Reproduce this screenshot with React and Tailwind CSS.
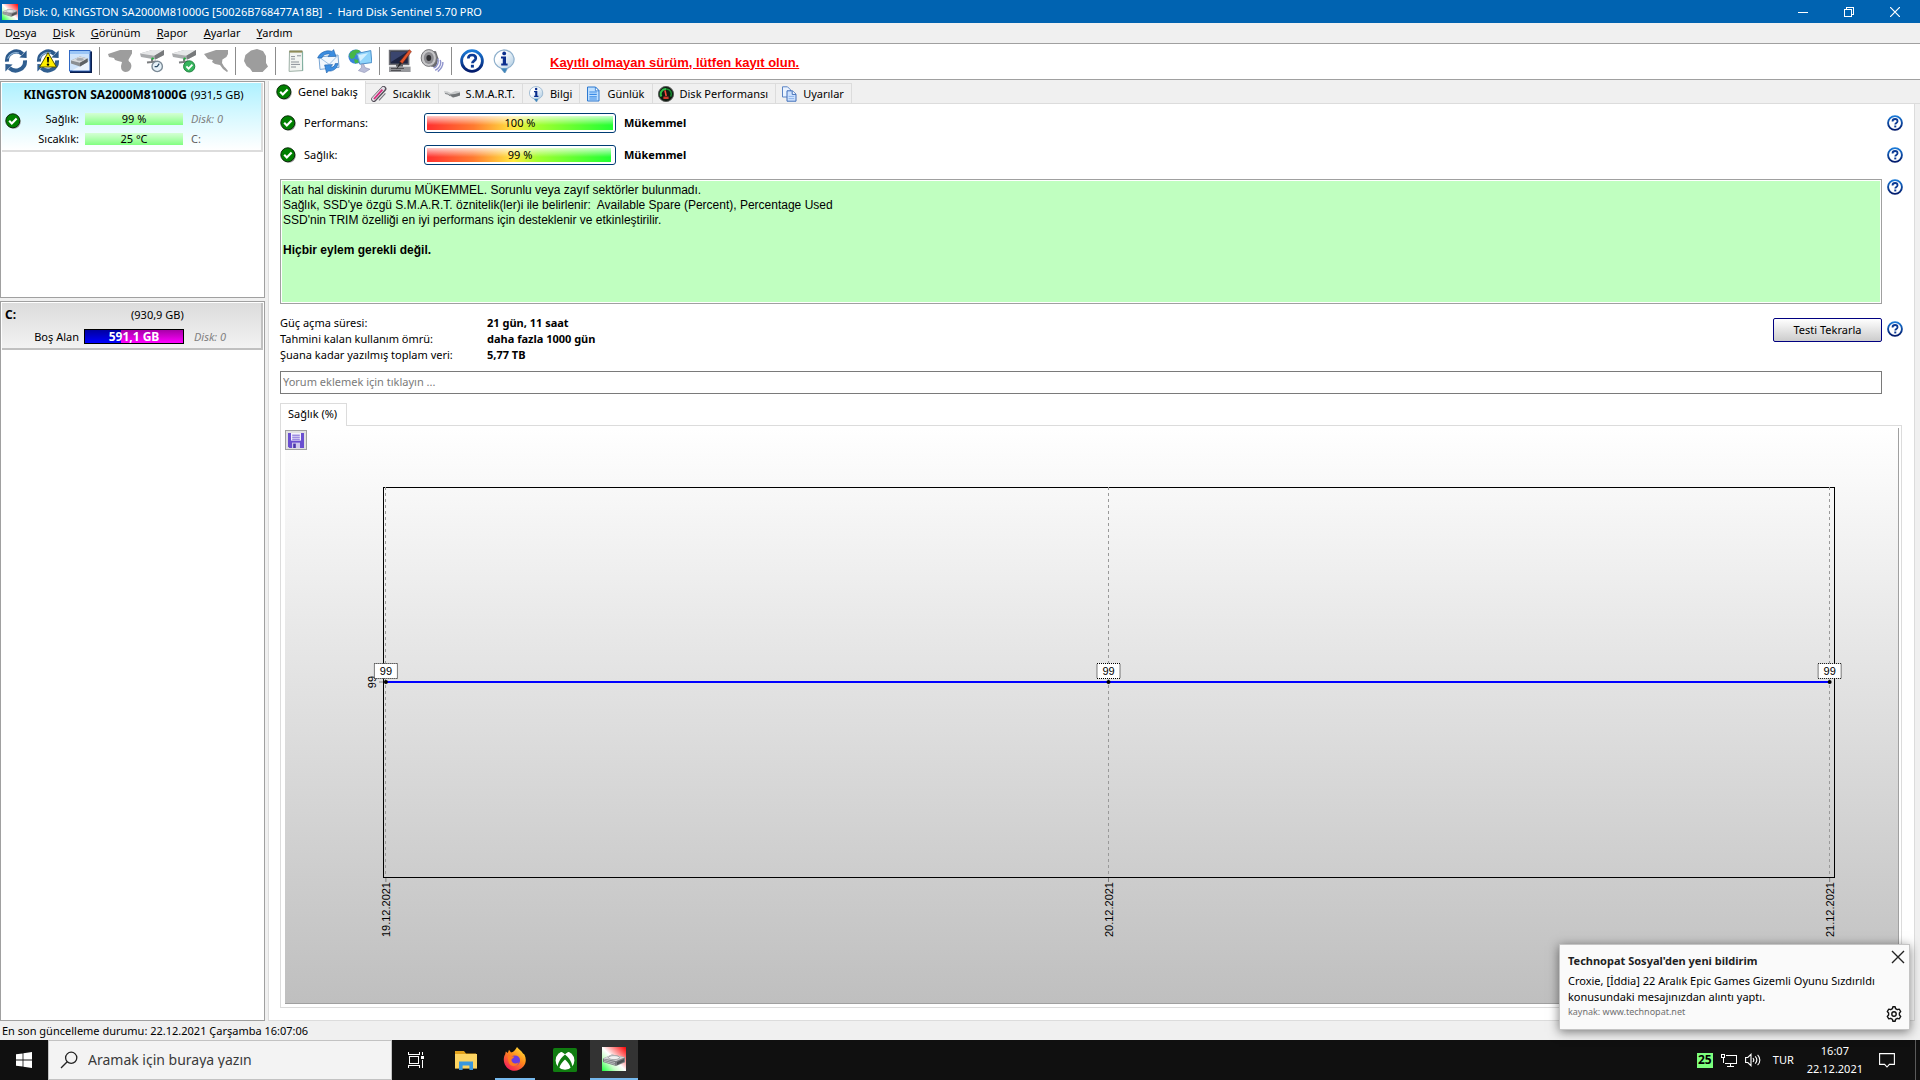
import React from "react";

const menus = [
    ["D", "o", "sya"],
    ["", "D", "isk"],
    ["", "G", "örünüm"],
    ["", "R", "apor"],
    ["", "A", "yarlar"],
    ["", "Y", "ardım"],
];

const history = [
    { date: "19.12.2021", value: 99, x: 0.2 },
    { date: "20.12.2021", value: 99, x: 50 },
    { date: "21.12.2021", value: 99, x: 99.7 },
];

/* ---------- icons ---------- */

function CheckIcon({ className = "h-4 w-4" }) {
    return (
        <svg viewBox="0 0 16 16" className={className} aria-hidden="true">
            <circle cx="8.8" cy="8.8" r="7" fill="#9a9a9a" />
            <circle cx="7.8" cy="7.8" r="7" fill="#008000" stroke="#0a2a0a" />
            <path d="M4.2 7.8l2.6 2.7 4.8-5" fill="none" stroke="#fff" strokeWidth="2.2" />
        </svg>
    );
}

function HelpIcon({ className = "h-4 w-4" }) {
    return (
        <svg viewBox="0 0 24 24" className={className} aria-hidden="true">
            <defs>
                <linearGradient id="helpRing" x1="0" y1="0" x2="0" y2="1">
                    <stop offset="0" stopColor="#1a7ad8" />
                    <stop offset="1" stopColor="#021a6b" />
                </linearGradient>
            </defs>
            <circle cx="12" cy="12" r="10.4" fill="#fff" stroke="url(#helpRing)" strokeWidth="2.8" />
            <path d="M8.3 9.6c0-2.3 1.6-3.6 3.8-3.6s3.7 1.2 3.7 3.2c0 2.6-3.4 2.7-3.4 5" fill="none" stroke="#0b3a94" strokeWidth="2.7" />
            <rect x="10.9" y="15.8" width="3" height="2.8" fill="#0b3a94" />
        </svg>
    );
}

function InfoIcon({ className = "h-4 w-4" }) {
    return (
        <svg viewBox="0 0 24 24" className={className} aria-hidden="true">
            <defs>
                <linearGradient id="infoFill" x1="0" y1="0" x2="1" y2="1">
                    <stop offset="0.3" stopColor="#fff" />
                    <stop offset="1" stopColor="#9cc0dc" />
                </linearGradient>
            </defs>
            <path d="M12 .8a11 9.6 0 0 1 3.4 18.4L12.8 24 9 19.2A11 9.6 0 0 1 12 .8z" fill="url(#infoFill)" stroke="#8fb0cc" strokeWidth="1.2" />
            <path d="M9 19.2l3.8 4.8 2.4-4.8z" fill="#3f86bb" />
            <circle cx="12.2" cy="4.4" r="1.9" fill="#0b2f8e" />
            <path d="M9 7.6h5v7h1.6v1.9H9.2v-1.9h1.6V9.4H9z" fill="#0b2f8e" />
        </svg>
    );
}

function RefreshArrows() {
    return (
        <>
            <path d="M3 12.6A9.3 9.3 0 0 1 18.6 5" fill="none" stroke="#2c5a8c" strokeWidth="4" />
            <path d="M15.4 8.6L22.6 9V1.6z" fill="#2c5a8c" />
            <path d="M21 11.4A9.3 9.3 0 0 1 5.4 19" fill="none" stroke="#315f90" strokeWidth="4" />
            <path d="M8.6 15.4L1.4 15v7.4z" fill="#315f90" />
            <path d="M3.6 9.6A9.3 9.3 0 0 1 15 4" fill="none" stroke="#8db4d6" strokeWidth="1.2" />
        </>
    );
}

function RefreshIcon() {
    return <svg viewBox="0 0 24 24" className="h-6 w-6" aria-hidden="true"><RefreshArrows /></svg>;
}

function RefreshWarnIcon() {
    return (
        <svg viewBox="0 0 24 24" className="h-6 w-6" aria-hidden="true">
            <RefreshArrows />
            <path d="M12 3.6L20.4 18H3.6z" fill="#ffee00" stroke="#555200" strokeWidth="1" />
            <path d="M10.9 8h2.2l-.4 5.6h-1.4z" fill="#000" />
            <circle cx="12" cy="15.6" r="1.2" fill="#000" />
        </svg>
    );
}

function DriveWindowIcon() {
    return (
        <svg viewBox="0 0 24 24" className="h-6 w-6" aria-hidden="true">
            <path d="M2 2.4h22V24H2z" fill="#0a1e4e" />
            <rect x="1.5" y="1.5" width="20.4" height="20.4" fill="#cfe4fb" stroke="#2f68c4" />
            <path d="M2 2h19.4v3H2z" fill="#9cc6f6" />
            <path d="M4 21.400h17.400V12z" fill="#fff" opacity="0.6" />
            <path d="M3 11.400L12 7.400l7.600 2v3.600L12 17.600 3 14.400z" fill="#8b8f92" />
            <path d="M3 11.400L12 7.400l7.600 2L12 13.800z" fill="#d8dadc" />
            <path d="M12 13.800l7.600-4.400V13L12 17.600z" fill="#5e6265" />
            <ellipse cx="12" cy="10.400" rx="3.600" ry="1.400" fill="#a6a9ac" />
        </svg>
    );
}

function DiskIcon({ badge }) {
    return (
        <svg viewBox="0 0 24 24" className="h-6 w-6" aria-hidden="true">
            <path d="M0 4.600L12 1h12v5l-8.600 4.400L1 8z" fill="#a9abad" />
            <path d="M0 4.600L12 1h12L14.400 6.800z" fill="#e6e7e8" />
            <path d="M14.400 6.800L24 1v5l-8.600 4.400z" fill="#77797b" />
            <path d="M12 10v4M7 13.600l9-1" stroke="#7a7c7e" strokeWidth="2" />
            <circle cx="12.600" cy="9.600" r="1.200" fill="#1fae3c" />
            {badge === "clock" && (
                <>
                    <circle cx="17.200" cy="17.400" r="5.200" fill="#e6f1f8" stroke="#7b8a96" strokeWidth="1.4" />
                    <path d="M17.200 17.600l2-3M17.200 17.600h-2.600" stroke="#2b4b66" strokeWidth="1.2" />
                </>
            )}
            {badge === "check" && (
                <>
                    <circle cx="17.200" cy="17.400" r="5.600" fill="#36b55d" stroke="#1f8240" />
                    <path d="M14.400 17.400l2.200 2.300 3.800-4" fill="none" stroke="#fff" strokeWidth="1.8" />
                </>
            )}
        </svg>
    );
}

function GreyDiskIcon({ shape }) {
    const d = shape === "round"
        ? "M0 5L6 3l6-2h12v3.6l-2 3.4-1.6 3 .6 1.6c3 2 3 6 1 8.4-2.6 3-8 2.4-8.8-1.6L13 17l1-4-4-1-3-1-1-2-5-1z"
        : "M0 5L6 3l6-2h12v4l-1.600 3-4 2.600-.4 3.400 2 3.600 1.600 1.400 2.400 3-1 1-4-3-3-4-5-1-3-2 1-2-5-1z";
    return <svg viewBox="0 0 24 24" className="h-6 w-6" aria-hidden="true"><path d={d} fill="#9d9d9d" /></svg>;
}

function GreyBlobIcon() {
    return (
        <svg viewBox="0 0 24 24" className="h-6 w-6" aria-hidden="true">
            <path d="M7 1.400L13 0l6 2 3 5v7l2 3.600-3 3L18.600 23H8.400L6 19.600 2.600 17 0 12l1.400-6z" fill="#9d9d9d" />
        </svg>
    );
}

function NotesIcon() {
    return (
        <svg viewBox="0 0 24 24" className="h-6 w-6" aria-hidden="true">
            <path d="M5.5 2h12.800l.4 19.600-13.600.8z" fill="#f2f4f1" stroke="#9db0a6" />
            <path d="M5.400 1.600h13v2h-13z" fill="#8e8a57" />
            <path d="M7 7.600h4M13 6.800h4M7 10h4M7 13h8M7 15.400h9M7 18h5" stroke="#8a9097" strokeWidth="1" />
            <path d="M18.600 3v18.800" stroke="#7fb0a0" />
        </svg>
    );
}

function MailSyncIcon() {
    return (
        <svg viewBox="0 0 24 24" className="h-6 w-6" aria-hidden="true">
            <path d="M3 8l19-2 1 12.400L4 20.400z" fill="#f1f7fd" stroke="#7aa6d4" />
            <path d="M3.400 8.400l9.800 7L22 6.400" fill="none" stroke="#9cbfe2" />
            <path d="M1.600 9C4 3 11 .6 16 2.400L17.600.6 20 7.400l-8 .2 2-2.400C10 4.400 7 6 5.800 9z" fill="#3b8de0" stroke="#1d5ea8" strokeWidth="0.6" />
            <path d="M22 14.600c-1 6-6 8-9.600 7.400l-1.800 2L8.600 16l8-.4-2 2.600c3 .4 4.400-1.600 4.600-3.600z" fill="#3b8de0" stroke="#1d5ea8" strokeWidth="0.6" />
        </svg>
    );
}

function NetworkPcIcon() {
    return (
        <svg viewBox="0 0 24 24" className="h-6 w-6" aria-hidden="true">
            <circle cx="7.6" cy="7.6" r="7.2" fill="#3a82dc" />
            <path d="M1.400 5c3-5 8-5 11-3l-2 3-3 1-1 3-3 1-2-2zM6 10l5 1 1 2-5 1.400z" fill="#45b649" />
            <path d="M8.600 4.600L22.800 1.600l1 12-12 1.600z" fill="#8fd4fb" stroke="#4b8fca" />
            <path d="M10.600 6l9.400-1.800-7.600 8z" fill="#d3f0ff" />
            <path d="M15.600 15l1.400 3.600 5 1.600-5.600 3.400-6-2 3-2.800V15.400z" fill="#b9bdd8" stroke="#8a8fb4" strokeWidth="0.6" />
        </svg>
    );
}

function ConfigPcIcon() {
    return (
        <svg viewBox="0 0 24 24" className="h-6 w-6" aria-hidden="true">
            <rect x="1.6" y="1.6" width="19" height="13.8" fill="#1d2440" stroke="#6d6e74" strokeWidth="1.6" />
            <path d="M3 3h16L3 13z" fill="#3a456e" />
            <path d="M1 17.600h21.600V23H1z" fill="#97989c" />
            <path d="M3 19.400h13M3 21.400h10" stroke="#4a4a4e" />
            <path d="M8 15h7v2.600H8z" fill="#5e5f64" />
            <path d="M21.400.8l2 1.800-9 12-2.600-1.800z" fill="#e2552c" stroke="#7d2410" strokeWidth="0.6" />
            <path d="M12 13l1.600 1.400-5.400 6.200z" fill="#222" />
        </svg>
    );
}

function SpeakerIcon() {
    return (
        <svg viewBox="0 0 24 24" className="h-6 w-6" aria-hidden="true">
            <path d="M9 1.400l7 .8 2.400 7.400-2.400 9-5-1z" fill="#6b6b6e" />
            <ellipse cx="8.8" cy="9" rx="7.6" ry="8.4" fill="#c6c6c8" stroke="#77777a" />
            <ellipse cx="8.8" cy="9" rx="5" ry="6" fill="#8c8c90" />
            <ellipse cx="8.8" cy="9" rx="2.4" ry="3" fill="#2f2f32" />
            <path d="M17.600 9.600c1.600 3 0 8-4 9.400M20.200 11c1.400 4-1 8-5 10.400M22.800 13c.6 4-2 7-5 9.600" fill="none" stroke="#8f94cc" strokeWidth="1.4" />
        </svg>
    );
}

function ThermoIcon() {
    return (
        <svg viewBox="0 0 16 16" className="h-4 w-4" aria-hidden="true">
            <path d="M3 13.200L12.600 2.800" stroke="#55505a" strokeWidth="5.6" strokeLinecap="round" />
            <path d="M2.600 13L12.200 2.600" stroke="#e4dfe6" strokeWidth="3.6" strokeLinecap="round" />
            <path d="M3 13L11.400 3.600" stroke="#d6287c" strokeWidth="1.8" />
            <path d="M8 14.400l6.400-7" stroke="#77727c" strokeWidth="1.2" />
        </svg>
    );
}

function SmartIcon() {
    return (
        <svg viewBox="0 0 16 16" className="h-4 w-4" aria-hidden="true">
            <path d="M0 5l3.600.4L7 7l4.400-2 4.600.4v4.200L12 11l-3.600.4-3.400-2-4-1.400z" fill="#c9cbcc" />
            <path d="M5 8.600l4 2.800 3-.6 4-1.400V6.600L11 8z" fill="#727577" />
            <path d="M1 7.400l3 .6 2 2" stroke="#8b8e90" fill="none" />
        </svg>
    );
}

function PageIcon() {
    return (
        <svg viewBox="0 0 16 16" className="h-4 w-4" aria-hidden="true">
            <path d="M2.5 1h8L14 4.600V15H2.500z" fill="#bfe0ff" stroke="#2d79d0" />
            <path d="M10.400 1v3.800H14z" fill="#fff" stroke="#2d79d0" strokeWidth="0.8" />
            <path d="M4.400 6h7.400M4.400 8.400h7.400M4.400 10.800h7.400M4.400 13h7.400" stroke="#3a8ae6" strokeWidth="1.2" />
        </svg>
    );
}

function GaugeIcon() {
    return (
        <svg viewBox="0 0 16 16" className="h-4 w-4" aria-hidden="true">
            <circle cx="8" cy="8" r="7.6" fill="#0f1a12" stroke="#5a5d5a" />
            <path d="M3.400 10.600A5 5 0 0 1 8 3" fill="none" stroke="#2fc04b" strokeWidth="2" />
            <path d="M8 3a5 5 0 0 1 4.600 7.600" fill="none" stroke="#178a2e" strokeWidth="1.6" />
            <path d="M8.200 10L7 4.400" stroke="#ff4a3c" strokeWidth="1.6" />
            <rect x="5.4" y="10.6" width="5.2" height="2.4" fill="#d0382c" />
        </svg>
    );
}

function CopyIcon() {
    return (
        <svg viewBox="0 0 16 16" className="h-4 w-4" aria-hidden="true">
            <path d="M1.500.8h5l3 3V11h-8z" fill="#eaf3ff" stroke="#5b84c4" />
            <path d="M6 4.800h5.400L15 8.200v7H6z" fill="#cfe3ff" stroke="#3e6db8" />
            <path d="M11.200 5v3.400H15" fill="#fff" stroke="#3e6db8" />
            <path d="M7.600 10.400h5.600M7.600 12.600h5.600" stroke="#8fb4ea" />
        </svg>
    );
}

function SaveIcon() {
    return (
        <svg viewBox="0 0 16 16" className="h-4 w-4" aria-hidden="true">
            <path d="M0 1h16v15H1.400L0 14.600z" fill="#6a4fd0" />
            <path d="M3 1h10v7.600H3z" fill="#f4f2fc" />
            <path d="M4.200 3.200h7.600M4.200 5.200h7.600M4.200 7.200h7.600" stroke="#6a4fd0" strokeWidth="0.9" />
            <path d="M4 10.600h8V16H4z" fill="#cfc8ee" />
            <path d="M5.200 11.600h2.600V16H5.200z" fill="#4a35a8" />
        </svg>
    );
}

function SentinelIcon({ className }) {
    return (
        <svg viewBox="0 0 24 24" className={className} aria-hidden="true">
            <defs>
                <linearGradient id="hdsFill" x1="1" y1="0" x2="0" y2="1">
                    <stop offset="0" stopColor="#ff0000" />
                    <stop offset="0.35" stopColor="#ffb0b0" />
                    <stop offset="0.5" stopColor="#fff" />
                    <stop offset="0.7" stopColor="#c8ffc8" />
                    <stop offset="1" stopColor="#1bff3b" />
                </linearGradient>
            </defs>
            <rect width="24" height="24" fill="url(#hdsFill)" />
            <path d="M1 11.400L10 7.600l13 2.600v5L14 19 1 15z" fill="#7c7f81" />
            <path d="M1 11.400L10 7.600l13 2.600L14 14z" fill="#d3d5d6" />
            <ellipse cx="12" cy="10.6" rx="5.6" ry="2" fill="#f1f1f1" stroke="#8c8f91" strokeWidth="0.7" />
            <path d="M2 12.600l11 3M2 14.200l11 3.200" stroke="#c5c7c9" strokeWidth="0.8" />
            <path d="M15 15l7-3v2.600l-7 3.400z" fill="#4f5254" />
        </svg>
    );
}

function FolderIcon() {
    return (
        <svg viewBox="0 0 24 24" className="h-6 w-6" aria-hidden="true">
            <path d="M1 3h9l2 2.400H22V9H1z" fill="#e2a21c" />
            <path d="M1 6h22v14.600H1z" fill="#fcd462" />
            <path d="M5 13.400h14V22h-3.600v-4.400H8.600V22H5z" fill="#3a97dd" />
        </svg>
    );
}

function FirefoxIcon() {
    return (
        <svg viewBox="0 0 24 24" className="h-7 w-6" aria-hidden="true">
            <defs>
                <linearGradient id="foxBody" x1="0.9" y1="0" x2="0.2" y2="1">
                    <stop offset="0" stopColor="#ffec3d" />
                    <stop offset="0.45" stopColor="#ff8b1a" />
                    <stop offset="1" stopColor="#f3155f" />
                </linearGradient>
            </defs>
            <path d="M14 0c1.400 2.400 4.400 3.400 6 6.400l1.400 1c2 4 2 8.600-1 12.200C15.600 25.400 6.600 25 2.800 19-.2 14.400.6 9.600 2.200 7.200l.6-2.600 2 1.400L6 2.800l2 2.800C10.600 5.400 12.400 3 14 0z" fill="url(#foxBody)" />
            <circle cx="12" cy="13.4" r="5" fill="#6a3ce0" />
            <path d="M5 9c2-1 4 .4 6.400.4-.4 1.800-2.600 1.800-3 3.400 0 3.600 4.600 4.800 7.400 2.400-1 4.400-8 5.400-10 .6C5 13.600 4.600 11 5 9z" fill="#ff7a1f" />
        </svg>
    );
}

function XboxIcon() {
    return (
        <svg viewBox="0 0 24 24" className="h-6 w-6" aria-hidden="true">
            <rect width="24" height="24" rx="1.5" fill="#107c10" />
            <circle cx="12" cy="12.4" r="9.4" fill="#fff" />
            <path d="M6 3.600c2.200 0 4.400 1.400 6 2.600 1.600-1.200 3.800-2.600 6-2.600L12 .6zM9.800 8.400C6.600 11.600 4.400 16 5 19.400l1.200.8c1-3.600 3.400-6.400 5.800-8.600 2.400 2.200 4.800 5 5.800 8.600l1.200-.8c.6-3.400-1.600-7.800-4.800-11L12 6.600z" fill="#107c10" />
        </svg>
    );
}

/* ---------- toolbar ---------- */

function ToolButton({ label, children }) {
    return (
        <button type="button" aria-label={label} className="flex h-8 w-8 items-center justify-center">
            {children}
        </button>
    );
}

function Divider() {
    return <span className="mx-[3px] h-7 w-[2px] border-l border-[#8c8c8c]" />;
}

function Toolbar() {
    return (
        <div className="flex h-9 items-center border-b border-[#a0a0a0] bg-white pb-[2px]">
            <ToolButton label="Yenile"><RefreshIcon /></ToolButton>
            <ToolButton label="Uyarıları yenile"><RefreshWarnIcon /></ToolButton>
            <ToolButton label="Disk penceresi"><DriveWindowIcon /></ToolButton>
            <Divider />
            <ToolButton label="Disk"><GreyDiskIcon shape="round" /></ToolButton>
            <ToolButton label="Kısa test"><DiskIcon badge="clock" /></ToolButton>
            <ToolButton label="Genişletilmiş test"><DiskIcon badge="check" /></ToolButton>
            <ToolButton label="Yüzey testi"><GreyDiskIcon shape="sharp" /></ToolButton>
            <Divider />
            <ToolButton label="Durdur"><GreyBlobIcon /></ToolButton>
            <Divider />
            <ToolButton label="Rapor"><NotesIcon /></ToolButton>
            <ToolButton label="E-posta"><MailSyncIcon /></ToolButton>
            <ToolButton label="Ağ"><NetworkPcIcon /></ToolButton>
            <Divider />
            <ToolButton label="Ayarlar"><ConfigPcIcon /></ToolButton>
            <ToolButton label="Ses"><SpeakerIcon /></ToolButton>
            <Divider />
            <ToolButton label="Yardım"><HelpIcon className="h-6 w-6" /></ToolButton>
            <ToolButton label="Bilgi"><InfoIcon className="h-6 w-6" /></ToolButton>
            <a href="#kayit" className="pt-1 pl-[30px] font-['Liberation_Sans',sans-serif] text-[13px] font-bold text-[#ff0000] underline">
                Kayıtlı olmayan sürüm, lütfen kayıt olun.
            </a>
        </div>
    );
}

/* ---------- left side ---------- */

function MiniBar({ children }) {
    return (
        <div className="mx-px flex h-3 items-center justify-center bg-linear-to-b from-[#d4ffd4] to-[#80ff80]">
            {children}
        </div>
    );
}

function Sidebar() {
    return (
        <aside className="flex w-[265px] shrink-0 flex-col gap-[3px]">
            <div className="h-[217px] border border-[#a0a0a0] bg-white p-px">
                <section className="flex h-[69px] flex-col border-r-2 border-b-2 border-[#dcdcdc] bg-linear-to-b from-[#aef1ff] to-white pt-[2px]">
                    <h2 className="flex h-5 items-center justify-center gap-1 pl-1">
                        <span className="text-[12px] font-bold">KINGSTON SA2000M81000G</span>
                        <span>(931,5 GB)</span>
                    </h2>
                    <div className="mt-1 flex items-start pl-[3px]">
                        <CheckIcon className="mt-1 h-4 w-4" />
                        <div className="grid grid-cols-[58px_100px_60px] items-center gap-x-[5px]">
                            <span className="flex h-5 items-center justify-end">Sağlık:</span>
                            <MiniBar>99 %</MiniBar>
                            <span className="pl-[2px] text-[#808080] italic">Disk: 0</span>
                            <span className="flex h-5 items-center justify-end">Sıcaklık:</span>
                            <MiniBar>25 °C</MiniBar>
                            <span className="pl-[2px] text-[#606060]">C:</span>
                        </div>
                    </div>
                </section>
            </div>
            <div className="flex-1 border border-[#a0a0a0] bg-white p-px">
                <section className="border-r-2 border-b-2 border-[#c0c0c0] bg-linear-to-b from-[#dcdcdc] to-[#f2f2f2] py-[2px]">
                    <div className="flex h-5 items-center pl-[3px]">
                        <span className="w-[126px] text-[12px] font-bold">C:</span>
                        <span>(930,9 GB)</span>
                    </div>
                    <div className="mt-[2px] flex h-[19px] items-center">
                        <span className="w-[82px] pr-[5px] text-right">Boş Alan</span>
                        <div className="flex h-[15px] w-[100px] items-center justify-center border border-black bg-linear-to-b from-[#a800a8] to-[#ff00ff]">
                            <div className="flex h-full w-full items-center justify-center bg-linear-to-b from-[#0000a0] to-[#0000ff] bg-[length:37%_100%] bg-no-repeat text-[12px] font-bold text-white">
                                591,1 GB
                            </div>
                        </div>
                        <span className="pl-[10px] text-[#808080] italic">Disk: 0</span>
                    </div>
                </section>
            </div>
        </aside>
    );
}

/* ---------- overview ---------- */

const tabs = [
    { label: "Sıcaklık", icon: <ThermoIcon /> },
    { label: "S.M.A.R.T.", icon: <SmartIcon /> },
    { label: "Bilgi", icon: <InfoIcon /> },
    { label: "Günlük", icon: <PageIcon /> },
    { label: "Disk Performansı", icon: <GaugeIcon /> },
    { label: "Uyarılar", icon: <CopyIcon /> },
];

function Tabs() {
    return (
        <div role="tablist" className="flex h-[23px] items-end shadow-[inset_0_-1px_#dcdcdc]">
            <button type="button" role="tab" aria-selected="true" className="flex h-full items-center gap-[6px] border-x border-[#dcdcdc] bg-white px-[7px] pb-[2px]">
                <CheckIcon />
                Genel bakış
            </button>
            {tabs.map((t) => (
                <button
                    key={t.label}
                    type="button"
                    role="tab"
                    aria-selected="false"
                    className="flex h-[21px] items-center gap-[6px] border-t border-r border-b border-[#dcdcdc] pr-[7px] pl-[5px]"
                >
                    {t.icon}
                    {t.label}
                </button>
            ))}
        </div>
    );
}

function HelpButton() {
    return <button type="button" aria-label="Yardım" className="h-4 w-4 shrink-0"><HelpIcon /></button>;
}

function StatusRow({ label, value }) {
    return (
        <div className="flex h-8 items-center">
            <CheckIcon />
            <span className="w-[128px] pl-2">{label}</span>
            <div className="h-5 w-[192px] rounded-[3px] border border-[#003c74] p-[2px]">
                <div
                    className="h-full bg-[linear-gradient(to_bottom,rgba(255,255,255,0.75),rgba(255,255,255,0)_65%),linear-gradient(to_right,#ff3030,#ff7a30_25%,#ffe840_47%,#a0ff30_60%,#22ff33)]"
                    style={{ width: value + "%" }}
                >
                    <span className="flex h-full w-[186px] items-center justify-center">{value} %</span>
                </div>
            </div>
            <span className="flex-1 pl-2 font-bold">Mükemmel</span>
            <HelpButton />
        </div>
    );
}

function HealthChart() {
    return (
        <div className="flex flex-1 flex-col border-r border-b border-[#a0a0a0] bg-linear-to-b from-white to-[#bfbfbf] pt-[2px]">
            <button type="button" aria-label="Kaydet" className="flex h-5 w-[22px] items-center justify-center border border-[#a0a0a0] bg-[#e1e1e1]">
                <SaveIcon />
            </button>
            <div className="mt-[37px] mr-16 mb-[126px] ml-[98px] flex flex-1">
                <svg className="w-full overflow-visible font-['Liberation_Sans',sans-serif] text-[11px]" role="img" aria-label="Sağlık (%)">
                    <rect width="100%" height="100%" fill="none" stroke="#000" strokeWidth="1" shapeRendering="crispEdges" />
                    {history.map((p) => (
                        <line key={p.date} x1={p.x + "%"} x2={p.x + "%"} y1="0" y2="100%" stroke="#999" strokeDasharray="3 3" shapeRendering="crispEdges" />
                    ))}
                    <line x1="0.2%" x2="99.7%" y1="50%" y2="50%" stroke="#0000ff" strokeWidth="2" shapeRendering="crispEdges" />
                    <line x1="-4" x2="0" y1="50%" y2="50%" stroke="#808080" />
                    <svg x="0" y="50%" className="overflow-visible">
                        <text transform="translate(-7 0) rotate(-90)" textAnchor="middle">99</text>
                    </svg>
                    {history.map((p) => (
                        <React.Fragment key={p.date}>
                            <svg x={p.x + "%"} y="50%" className="overflow-visible">
                                <circle r="2" fill="#000" />
                                <rect x="-11.5" y="-18.5" width="23" height="15" fill="#fff" stroke="#000" strokeDasharray="1 1" />
                                <text y="-7" textAnchor="middle">{p.value}</text>
                            </svg>
                            <svg x={p.x + "%"} y="100%" className="overflow-visible">
                                <line y1="1" y2="5" stroke="#808080" />
                                <text transform="translate(4 5) rotate(-90)" textAnchor="end">{p.date}</text>
                            </svg>
                        </React.Fragment>
                    ))}
                </svg>
            </div>
        </div>
    );
}

const facts = [
    ["Güç açma süresi:", "21 gün, 11 saat"],
    ["Tahmini kalan kullanım ömrü:", "daha fazla 1000 gün"],
    ["Şuana kadar yazılmış toplam veri:", "5,77 TB"],
];

function Overview() {
    return (
        <div className="mr-[5px] flex flex-1 flex-col border-x border-b border-[#dcdcdc] bg-white px-[11px] pt-[3px] pb-3">
            <StatusRow label="Performans:" value={100} />
            <StatusRow label="Sağlık:" value={99} />

            <div className="mt-2 flex gap-[5px]">
                <div className="h-[125px] flex-1 border border-[#a0a0a0] p-px">
                    <div className="h-full bg-[#c0ffc0] px-px pt-[2px] font-['Liberation_Sans',sans-serif] text-[12px] leading-[15px] whitespace-pre-wrap">
                        <p>Katı hal diskinin durumu MÜKEMMEL. Sorunlu veya zayıf sektörler bulunmadı.</p>
                        <p>{"Sağlık, SSD'ye özgü S.M.A.R.T. öznitelik(ler)i ile belirlenir:  Available Spare (Percent), Percentage Used"}</p>
                        <p>SSD&apos;nin TRIM özelliği en iyi performans için desteklenir ve etkinleştirilir.</p>
                        <p className="mt-[15px] font-bold">Hiçbir eylem gerekli değil.</p>
                    </div>
                </div>
                <HelpButton />
            </div>

            <div className="mt-[11px] flex gap-[5px]">
                <dl className="grid flex-1 grid-cols-[207px_1fr] content-start leading-4">
                    {facts.map(([k, v]) => (
                        <React.Fragment key={k}>
                            <dt>{k}</dt>
                            <dd className="font-bold">{v}</dd>
                        </React.Fragment>
                    ))}
                </dl>
                <button type="button" className="mt-[3px] h-6 w-[109px] rounded-[2px] border border-[#000080] bg-linear-to-b from-white to-[#cccccc]">
                    Testi Tekrarla
                </button>
                <div className="pt-[6px]"><HelpButton /></div>
            </div>

            <input
                type="text"
                aria-label="Yorum"
                placeholder="Yorum eklemek için tıklayın ..."
                className="mt-2 mr-[21px] h-[23px] border border-[#7a7a7a] px-[2px] pb-[2px] placeholder:text-[#7a7a7a]"
            />

            <div role="tablist" className="mt-[9px] flex h-[22px]">
                <button type="button" role="tab" aria-selected="true" className="z-10 -mb-px border-x border-t border-[#dcdcdc] bg-white pr-[9px] pb-[2px] pl-[7px]">
                    Sağlık (%)
                </button>
            </div>
            <div className="mr-px flex flex-1 flex-col border border-[#dcdcdc] pt-[2px] pr-[2px] pb-[3px] pl-1">
                <HealthChart />
            </div>
        </div>
    );
}

/* ---------- desktop ---------- */

function Toast() {
    return (
        <div role="status" className="absolute right-[10px] bottom-[50px] flex h-[86px] w-[351px] justify-between border border-[#c4c4c4] bg-[#fafafa] py-2 pr-[3px] pl-2 shadow-[0_2px_10px_rgba(0,0,0,0.5)]">
            <div>
                <h3 className="leading-4 font-bold text-[#222]">Technopat Sosyal&apos;den yeni bildirim</h3>
                <p className="mt-1 leading-4 whitespace-nowrap">Croxie, [İddia] 22 Aralık Epic Games Gizemli Oyunu Sızdırıldı<br />konusundaki mesajınızdan alıntı yaptı.</p>
                <p className="text-[9px] leading-[14px] text-[#707070]">kaynak: www.technopat.net</p>
            </div>
            <div className="flex flex-col items-end justify-between">
                <button type="button" aria-label="Kapat" className="-mt-1 p-px">
                    <svg viewBox="0 0 14 14" className="h-3.5 w-3.5"><path d="M1 1l12 12M13 1L1 13" stroke="#222" strokeWidth="1.4" /></svg>
                </button>
                <button type="button" aria-label="Bildirim ayarları" className="-mb-px pr-1">
                    <svg viewBox="0 0 16 16" className="h-4 w-4" fill="none" stroke="#111" strokeWidth="1.4" strokeLinejoin="round">
                        <path d="M6.400 2.700L6.900.8h2.200l.5 1.900 1.700 1 1.900-.6 1.500 2.400-1.300 1.400v2.200l1.300 1.400-1.500 2.400-1.900-.6-1.700 1-.5 1.900H6.900l-.5-1.900-1.700-1-1.900.6-1.500-2.400 1.300-1.400V6.900L1.300 5.500l1.500-2.400 1.900.6z" />
                        <circle cx="8" cy="8" r="2.2" />
                    </svg>
                </button>
            </div>
        </div>
    );
}

function Taskbar() {
    return (
        <footer className="flex h-10 items-stretch bg-[#101010] text-white">
            <button type="button" aria-label="Başlat" className="flex w-12 items-center justify-center">
                <svg viewBox="0 0 16 16" className="h-4 w-4" fill="#fff"><path d="M0 2.300L6.600 1.400v6.200H0zM7.400 1.300L16 0v7.600H7.400zM0 8.400h6.600v6.200L0 13.700zM7.400 8.400H16V16l-8.600-1.300z" /></svg>
            </button>
            <label className="flex w-[344px] items-center gap-[10px] border border-[#c2c2c2] bg-[#f3f3f3] px-[11px]">
                <svg viewBox="0 0 18 18" className="h-[18px] w-[18px] shrink-0" fill="none" stroke="#222" strokeWidth="1.3"><circle cx="11.2" cy="6.8" r="5.6" /><path d="M7.200 10.800L1 17" /></svg>
                <input type="search" aria-label="Ara" placeholder="Aramak için buraya yazın" className="w-full text-[14px] outline-none placeholder:text-[#3a3a3a]" />
            </label>
            <button type="button" aria-label="Görev görünümü" className="flex w-12 items-center justify-center">
                <svg viewBox="0 0 16 16" className="h-4 w-4" fill="none" stroke="#fff" shapeRendering="crispEdges"><path d="M1.500 4.500h9v7h-9zM.5 0v2.500h11V0M.5 16v-2.500h11V16M14.500 0v3M14.500 8v8" /><path d="M13 4h3v3h-3z" fill="#fff" stroke="none" /></svg>
            </button>
            <button type="button" aria-label="Dosya Gezgini" className="ml-[2px] flex w-12 items-center justify-center"><FolderIcon /></button>
            <button type="button" aria-label="Firefox" className="mx-[5px] flex w-10 items-center justify-center border-b-2 border-[#76b9ed]"><FirefoxIcon /></button>
            <button type="button" aria-label="Xbox" className="mx-[5px] flex w-10 items-center justify-center"><XboxIcon /></button>
            <button type="button" aria-label="Hard Disk Sentinel" className="flex w-12 items-center justify-center border-b-2 border-[#76b9ed] bg-[#333]"><SentinelIcon className="h-6 w-6" /></button>

            <div className="ml-auto flex items-center">
                <span className="mr-2 flex h-[15px] w-4 items-center justify-center bg-[#7dff7d] text-[12px] font-bold text-black">25</span>
                <svg viewBox="0 0 16 16" className="mr-2 h-4 w-4" fill="none" stroke="#fff" shapeRendering="crispEdges"><path d="M4.500 3.500h11v8H4M9.500 12v2.500M6 14.500h7M.5 2.500h3v3h-3zM2.500 6v5" /></svg>
                <svg viewBox="0 0 16 16" className="mr-3 h-4 w-4" fill="none" stroke="#fff" strokeWidth="1.1"><path d="M.6 5.500h2.200L6 2.400v11.200L2.800 10.500H.6zM8 6c1 1.200 1 2.800 0 4M10.200 4.400c2 2.200 2 5 0 7.200M12.600 2.800c3 3 3 7.400 0 10.400" /></svg>
                <span className="mr-[13px]">TUR</span>
                <time className="mr-4 flex flex-col items-center leading-[18px]"><span>16:07</span><span>22.12.2021</span></time>
                <svg viewBox="0 0 16 16" className="mr-5 h-4 w-4" fill="none" stroke="#fff" strokeWidth="1.1"><path d="M.6 1.600h14.800v10.800H10.400L8 15l-2.400-2.600H.6z" /></svg>
                <span className="mr-1 h-10 w-px bg-[#5a5a5a]" />
            </div>
        </footer>
    );
}

export default function App() {
    return (
        <main className="relative flex min-h-screen flex-col overflow-hidden bg-[#f0f0f0] font-['Noto_Sans',sans-serif] text-[11px] leading-4 text-black">
            <header className="flex h-[23px] items-center bg-[#0063b1] pr-[2px] text-white">
                <SentinelIcon className="mr-[5px] ml-[2px] h-4 w-4" />
                <h1 className="flex-1 whitespace-pre">{"Disk: 0, KINGSTON SA2000M81000G [50026B768477A18B]  -  Hard Disk Sentinel 5.70 PRO"}</h1>
                <button type="button" aria-label="Simge durumuna küçült" className="flex w-[46px] justify-center">
                    <svg viewBox="0 0 10 10" className="h-2.5 w-2.5" stroke="#fff" shapeRendering="crispEdges"><path d="M0 5.500h10" /></svg>
                </button>
                <button type="button" aria-label="Önceki boyut" className="flex w-[46px] justify-center">
                    <svg viewBox="0 0 10 10" className="h-2.5 w-2.5" fill="none" stroke="#fff" shapeRendering="crispEdges"><path d="M.5 2.500h7v7h-7zM2.500 2V.5h7v7H8" /></svg>
                </button>
                <button type="button" aria-label="Kapat" className="flex w-[46px] justify-center">
                    <svg viewBox="0 0 10 10" className="h-2.5 w-2.5" stroke="#fff" strokeWidth="1.2"><path d="M0 0l10 10M10 0L0 10" /></svg>
                </button>
            </header>

            <nav className="flex h-[21px] items-center gap-4 border-b border-[#a0a0a0] pl-[5px]">
                {menus.map(([before, key, after]) => (
                    <button key={before + key + after} type="button">
                        {before}<u>{key}</u>{after}
                    </button>
                ))}
            </nav>

            <Toolbar />

            <div className="flex flex-1 gap-[3px] pt-px">
                <Sidebar />
                <div className="flex min-w-0 flex-1 flex-col">
                    <Tabs />
                    <Overview />
                </div>
            </div>

            <p className="flex h-[19px] items-center pl-[2px]">En son güncelleme durumu: 22.12.2021 Çarşamba 16:07:06</p>
            <Taskbar />
            <Toast />
        </main>
    );
}
